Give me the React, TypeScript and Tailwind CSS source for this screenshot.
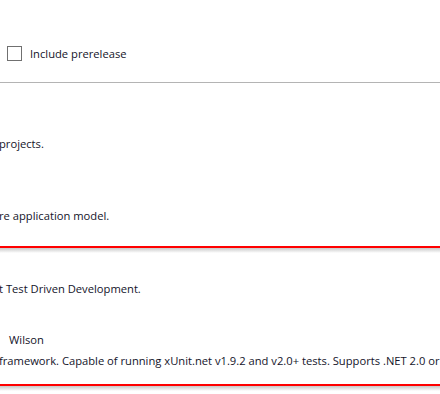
import React from "react";

export default function App() {
  const font = { fontFamily: '"Open Sans", "Segoe UI", sans-serif' };
  return (
    <div
      className="w-[440px] h-[394px] overflow-hidden bg-white text-[11.2px] text-[#14142a] flex flex-col"
      style={font}
    >
      <div className="h-[82px] shrink-0 pt-[46px] pl-[7px] flex items-start gap-[8px]">
        <div className="w-[15px] h-[15px] border border-[#707070] bg-white shrink-0" />
        <span className="leading-[15px] whitespace-nowrap">Include prerelease</span>
      </div>
      <div className="h-px shrink-0 bg-[#b4b4b4]" />
      <div className="h-[163px] shrink-0 flex flex-col pt-[53px] gap-[56px] whitespace-nowrap">
        <div className="leading-[16px] ml-[-1px]">projects.</div>
        <div className="leading-[16px] ml-[-1px]">re application model.</div>
      </div>
      <div className="h-[2px] shrink-0 bg-[#ff0000]" />
      <div className="h-[5px] shrink-0 bg-gradient-to-b from-[#c8c8c8] to-white" />
      <div className="h-[131px] shrink-0 flex flex-col pt-[28px] whitespace-nowrap">
        <div className="leading-[16px] ml-[-1px]">t Test Driven Development.</div>
        <div className="leading-[16px] mt-[35px] ml-[9px]">Wilson</div>
        <div className="leading-[16px] mt-[5px] ml-[-1px] overflow-hidden">
          framework. Capable of running xUnit.net v1.9.2 and v2.0+ tests. Supports .NET 2.0 or
        </div>
      </div>
      <div className="h-[2px] shrink-0 bg-[#ff0000]" />
      <div className="h-[5px] shrink-0 bg-gradient-to-b from-[#c8c8c8] to-white" />
    </div>
  );
}
